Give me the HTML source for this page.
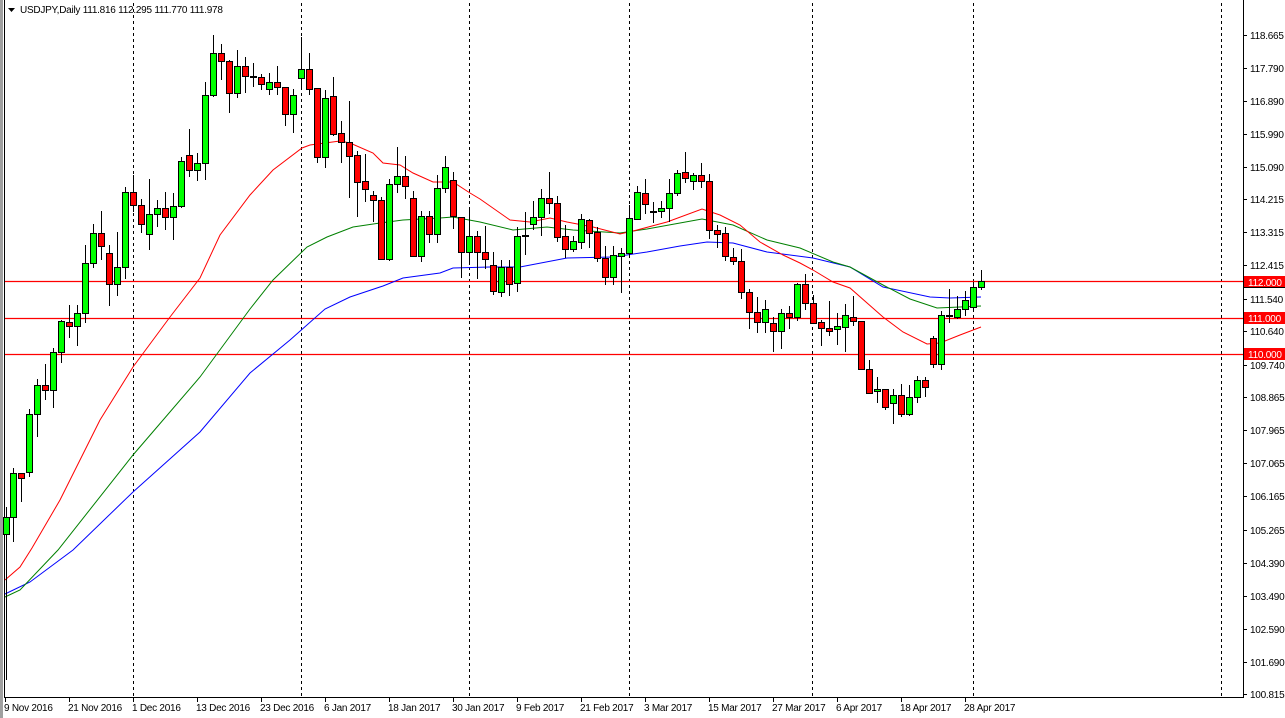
<!DOCTYPE html>
<html><head><meta charset="utf-8"><style>
html,body{margin:0;padding:0;background:#fff;width:1285px;height:718px;overflow:hidden}
svg{display:block}
text{font-family:"Liberation Sans",sans-serif;font-size:10px;letter-spacing:-0.25px;fill:#000}
</style></head><body>
<svg id="s" width="1285" height="718" xmlns="http://www.w3.org/2000/svg">
<rect x="0" y="0" width="1285" height="718" fill="#fff"/>
<rect x="0" y="0" width="3" height="718" fill="#a0a0a0"/>
<line x1="4.5" y1="0" x2="4.5" y2="697" stroke="#000"/>
<g stroke="#000" stroke-dasharray="3,3">
<line x1="133.5" y1="3" x2="133.5" y2="697"/><line x1="301.5" y1="3" x2="301.5" y2="697"/>
<line x1="469.5" y1="3" x2="469.5" y2="697"/><line x1="629.5" y1="3" x2="629.5" y2="697"/>
<line x1="812.5" y1="3" x2="812.5" y2="697"/><line x1="973.5" y1="3" x2="973.5" y2="697"/>
<line x1="1221.5" y1="3" x2="1221.5" y2="697"/>
</g>
<g stroke="#f00" stroke-width="1.3">
<line x1="5" y1="281.5" x2="1243" y2="281.5"/>
<line x1="5" y1="318.5" x2="1243" y2="318.5"/>
<line x1="5" y1="354.5" x2="1243" y2="354.5"/>
</g>
<g id="ma" fill="none" stroke-width="1">
<polyline stroke="#00f" points="5,594 30,582 73,550 133,492 200,432 250,373 290,340 325,309 350,297 383,286 403,278 440,273 453,268 490,267 520,267 567,258 613,257 647,252 680,246 707,242 733,243 767,252 813,258 850,267 883,287 930,297 950,298 981,297"/>
<polyline stroke="#008000" points="5,597 20,590 58,550 133,455 200,377 250,309 273,280 307,247 327,237 353,227 380,223 403,220 440,218 453,217 480,222 513,230 547,227 573,230 620,233 647,229 680,223 702,219 733,225 767,240 800,248 833,262 850,267 883,285 910,299 937,308 960,307 981,306"/>
<polyline stroke="#f00" points="5,580 20,567 32,548 60,500 100,420 133,367 170,317 200,278 220,235 250,195 273,170 302,148 310,145 340,141 350,143 373,153 383,163 400,165 413,173 433,182 453,182 470,193 480,199 510,220 530,222 550,218 567,222 593,227 620,234 637,230 667,222 702,209 720,215 740,225 760,242 783,255 800,263 813,270 833,282 850,288 883,317 903,332 927,344 940,343 960,335 981,327"/>
</g>
<line x1="1243.5" y1="0" x2="1243.5" y2="698" stroke="#000"/>
<line x1="4" y1="697.5" x2="1244" y2="697.5" stroke="#000"/>
<g id="c" shape-rendering="crispEdges"></g>
<g id="ax"></g>
<text x="20" y="13">USDJPY,Daily  111.816 112.295 111.770 111.978</text>
<polygon points="8,8 15,8 11.5,12" fill="#000"/>
</svg>
<script>
var d=[
[6,517,534,507,680,'g'],
[13,473,517,468,542,'g'],[21,473,478,473,502,'r'],[29,414,472,409,477,'g'],[37,385,414,379,437,'g'],[45,385,390,364,400,'r'],
[53,352,390,348,408,'g'],[61,321,352,320,363,'g'],[69,322,326,305,338,'r'],[77,313,326,305,346,'g'],[85,263,313,245,323,'g'],
[93,233,263,224,268,'g'],[101,233,246,211,260,'r'],[109,253,284,245,306,'r'],[117,267,284,232,296,'g'],[125,192,267,187,279,'g'],
[133,192,205,175,212,'r'],[141,205,224,199,233,'r'],[149,214,234,179,250,'g'],[157,208,214,200,227,'g'],[165,208,217,192,230,'r'],
[173,206,217,193,240,'g'],[181,161,206,157,208,'g'],[189,155,170,129,177,'r'],[197,163,170,153,181,'g'],[205,95,163,82,180,'g'],
[213,53,95,35,97,'g'],[221,53,61,44,80,'r'],[229,61,93,60,113,'r'],[237,66,93,50,98,'g'],[245,66,76,57,93,'r'],
[253,77,77,63,87,'r'],[261,77,84,74,90,'r'],[269,82,89,73,95,'g'],[277,82,87,66,95,'r'],[285,87,114,87,126,'r'],
[293,95,114,89,133,'g'],[301,69,78,37,88,'g'],[309,69,89,53,95,'r'],[317,88,157,88,163,'r'],[325,98,157,90,168,'g'],
[333,96,134,77,136,'r'],[341,133,142,121,163,'r'],[349,142,156,101,198,'r'],[357,155,182,151,217,'r'],[365,181,189,154,202,'r'],
[373,195,200,191,222,'r'],[381,200,259,197,260,'r'],[389,184,259,179,261,'g'],[397,176,184,147,193,'g'],[405,176,186,156,199,'r'],
[413,198,256,191,257,'r'],[421,216,256,211,262,'g'],[429,216,234,211,243,'r'],[437,188,234,175,243,'g'],[445,167,188,156,193,'g'],
[453,180,216,172,229,'r'],[461,217,252,217,278,'r'],[469,236,252,209,265,'g'],[477,236,252,231,279,'r'],[485,252,259,226,269,'r'],
[493,265,291,252,295,'r'],[501,267,292,260,297,'g'],[509,267,284,260,296,'r'],[517,236,283,227,292,'g'],[525,236,236,212,255,'g'],
[533,217,224,201,230,'g'],[541,198,217,189,236,'g'],[549,198,203,172,214,'r'],[557,203,237,196,242,'r'],[565,236,249,225,258,'r'],
[573,241,249,236,252,'g'],[581,219,242,214,249,'g'],[589,220,233,219,248,'r'],[597,232,258,227,262,'r'],[605,258,277,246,285,'r'],
[613,255,277,246,285,'g'],[621,253,256,248,293,'g'],[629,218,253,205,257,'g'],[637,192,219,186,220,'g'],[645,193,204,179,214,'r'],
[653,212,212,202,223,'r'],[661,208,211,201,218,'g'],[669,193,208,179,222,'g'],[677,173,193,170,196,'g'],[685,172,178,152,183,'r'],
[693,175,181,173,190,'g'],[701,175,181,163,188,'r'],[709,181,230,174,239,'r'],[717,230,234,225,248,'r'],[725,233,256,227,261,'r'],
[733,257,261,248,265,'r'],[741,261,292,249,299,'r'],[749,292,312,289,329,'r'],[757,312,322,297,333,'r'],[765,309,322,300,333,'g'],
[773,323,331,317,352,'r'],[781,313,331,309,349,'g'],[789,313,317,306,329,'r'],[797,284,317,283,321,'g'],[805,284,303,274,310,'r'],
[813,303,323,295,324,'r'],[821,322,328,320,346,'r'],[829,328,331,301,336,'r'],[837,326,329,313,345,'g'],[845,315,327,304,352,'g'],
[853,317,321,296,326,'r'],[861,321,369,321,369,'r'],[869,369,393,360,394,'r'],[877,389,391,377,403,'g'],[885,389,407,389,410,'r'],
[893,395,403,389,424,'g'],[901,395,414,384,417,'r'],[909,397,414,385,416,'g'],[917,380,397,376,403,'g'],[925,380,387,377,397,'r'],
[933,338,364,336,368,'r'],[941,315,364,311,370,'g'],[949,316,316,289,323,'r'],[957,309,317,296,319,'g'],[965,300,309,291,316,'g'],
[973,287,307,282,309,'g'],[981,281,287,270,290,'g']
];
var h='';
d.forEach(function(c){
 var x=c[0];
 h+='<rect x="'+x+'" y="'+c[3]+'" width="1" height="'+(c[4]-c[3])+'" fill="#000"/>';
 if(c[2]-c[1]<2){h+='<rect x="'+(x-3)+'" y="'+(c[1]-1)+'" width="7" height="2" fill="#000"/>';}
 else h+='<rect x="'+(x-3)+'" y="'+c[1]+'" width="7" height="'+(c[2]-c[1]+1)+'" fill="#000"/><rect x="'+(x-2)+'" y="'+(c[1]+1)+'" width="5" height="'+(c[2]-c[1]-1)+'" fill="'+(c[5]=='g'?'#00ff00':'#ff0000')+'"/>';
});
document.getElementById('c').innerHTML=h;
var a='';
var p=[['118.665',35],['117.790',68],['116.890',101],['115.990',134],['115.090',167],['114.215',199],['113.315',232],['112.415',265],['111.540',299],['110.640',331],['109.740',365],['108.865',397],['107.965',430],['107.065',463],['106.165',496],['105.265',530],['104.390',563],['103.490',596],['102.590',629],['101.690',662],['100.815',694]];
p.forEach(function(q){a+='<line x1="1243" y1="'+(q[1]+.5)+'" x2="1247" y2="'+(q[1]+.5)+'" stroke="#000"/><text x="1250" y="'+(q[1]+4)+'">'+q[0]+'</text>';});
[['112.000',282],['111.000',318],['110.000',354]].forEach(function(q){a+='<rect x="1244" y="'+(q[1]-6)+'" width="41" height="12" fill="#f00"/><text x="1248" y="'+(q[1]+4)+'" style="fill:#fff">'+q[0]+'</text>';});
a+='<rect x="1244" y="287" width="41" height="1" fill="#000"/>';
var L=['9 Nov 2016','21 Nov 2016','1 Dec 2016','13 Dec 2016','23 Dec 2016','6 Jan 2017','18 Jan 2017','30 Jan 2017','9 Feb 2017','21 Feb 2017','3 Mar 2017','15 Mar 2017','27 Mar 2017','6 Apr 2017','18 Apr 2017','28 Apr 2017'];
L.forEach(function(t,i){var x=5+64*i;a+='<line x1="'+(x+.5)+'" y1="697" x2="'+(x+.5)+'" y2="702" stroke="#000"/><text x="'+(x-1)+'" y="711">'+t+'</text>';});
document.getElementById('ax').innerHTML=a;
</script>
</body></html>
